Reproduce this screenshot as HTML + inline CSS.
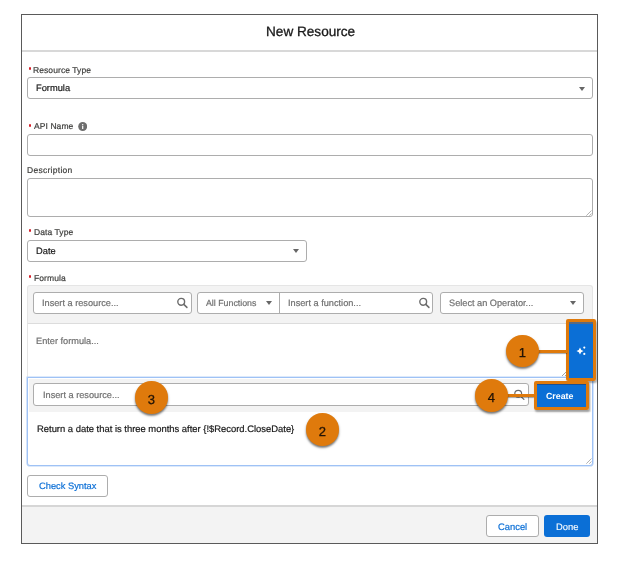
<!DOCTYPE html>
<html><head><meta charset="utf-8">
<style>
*{box-sizing:border-box;margin:0;padding:0}
html,body{width:621px;height:563px;background:#fff;overflow:hidden;position:relative;-webkit-font-smoothing:antialiased;text-rendering:geometricPrecision;font-family:"Liberation Sans",sans-serif;color:#181818}
.a{position:absolute}
.t{position:absolute;white-space:nowrap;line-height:1;will-change:transform;-webkit-text-stroke:0.2px currentColor}
.box{position:absolute;border:1px solid #adadad;border-radius:3px;background:#fff}
.lbl{font-size:8.5px;color:#3e3e3c;letter-spacing:0.08px}
.dot{position:absolute;left:28.6px;width:2.9px;height:2.9px;border-radius:50%;background:#d4202a}
.tri{position:absolute;width:0;height:0;border-left:3.9px solid transparent;border-right:3.9px solid transparent;border-top:4.4px solid #666}
.ph{color:#6f6f6f;font-size:9.2px}
.circ{position:absolute;width:32.5px;height:32.5px;border-radius:50%;background:#df7a0c;box-shadow:0 1.8px 2.2px rgba(0,0,0,.55)}
.circ span{position:absolute;left:0;right:0;top:11.5px;will-change:transform;-webkit-text-stroke:0.3px #231406;text-align:center;font-size:13px;line-height:1;color:#231406;font-family:"Liberation Sans",sans-serif}
.oline{position:absolute;height:3px;background:#df7a0c;box-shadow:0 1px 1px rgba(0,0,0,.35)}
</style></head><body>

<!-- dialog -->
<div class="a" style="left:21px;top:14px;width:577px;height:530px;border:1px solid #5a5a5a;background:#fff"></div>
<div class="a" style="left:22px;top:50px;width:575px;height:2px;background:#d8d8d8"></div>
<div class="t" style="left:266px;top:24.8px;font-size:13.6px;color:#181818;-webkit-text-stroke:0.3px #181818">New Resource</div>

<!-- Resource Type -->
<div class="dot" style="top:66.8px"></div><div class="t lbl" style="left:33.1px;top:65.6px">Resource Type</div>
<div class="box" style="left:27px;top:77px;width:566px;height:22px"></div>
<div class="t" style="left:36px;top:84px;font-size:9.3px">Formula</div>
<div class="tri" style="left:579px;top:86.6px"></div>

<!-- API Name -->
<div class="dot" style="top:123.7px"></div><div class="t lbl" style="left:33.7px;top:121.8px">API Name</div>
<svg class="a" style="left:78px;top:121.5px" width="9.4" height="9.4" viewBox="0 0 9.4 9.4"><circle cx="4.7" cy="4.5" r="4.5" fill="#6e6e6e"/><circle cx="4.7" cy="2.7" r="0.75" fill="#fff"/><path d="M4.1 4.0 H5.3 V6.9 H4.1Z" fill="#fff"/></svg>
<div class="box" style="left:27px;top:133.5px;width:566px;height:22px"></div>

<!-- Description -->
<div class="t lbl" style="left:27px;top:165.7px;letter-spacing:0.28px">Description</div>
<div class="box" style="left:27px;top:177.5px;width:566px;height:39.3px"></div>

<!-- Data Type -->
<div class="dot" style="top:229.2px"></div><div class="t lbl" style="left:33.7px;top:228px">Data Type</div>
<div class="box" style="left:27px;top:239.5px;width:280px;height:22px"></div>
<div class="t" style="left:35.5px;top:247px;font-size:9.3px">Date</div>
<div class="tri" style="left:293px;top:248.8px"></div>

<!-- Formula -->
<div class="dot" style="top:275.2px"></div><div class="t lbl" style="left:33.7px;top:274px">Formula</div>
<div class="a" style="left:27px;top:285px;width:566px;height:39px;background:#f3f3f3;border:1px solid #e5e5e5;border-bottom:1.5px solid #dcdcdc;border-radius:3px 3px 0 0"></div>
<div class="box" style="left:33px;top:291.5px;width:159px;height:22px"></div>
<div class="t ph" style="left:42px;top:299px">Insert a resource...</div>
<div class="box" style="left:197px;top:291.5px;width:236px;height:22px"></div>
<div class="a" style="left:279px;top:292px;width:1px;height:21px;background:#adadad"></div>
<div class="t ph" style="left:206px;top:299px;font-size:8.8px">All Functions</div>
<div class="tri" style="left:266px;top:300.8px"></div>
<div class="t ph" style="left:288px;top:299px">Insert a function...</div>
<div class="box" style="left:439.5px;top:291.5px;width:144px;height:22px"></div>
<div class="t ph" style="left:448.5px;top:299px">Select an Operator...</div>
<div class="tri" style="left:570px;top:301px"></div>

<!-- editor -->
<div class="a" style="left:27px;top:324px;width:566px;height:54px;border-left:1px solid #e5e5e5;border-right:1px solid #e5e5e5"></div>
<div class="t ph" style="left:36px;top:336.5px">Enter formula...</div>

<!-- focused textarea -->
<div class="a" style="left:27px;top:377px;width:566px;height:89px;border:1px solid #9fc2f5;border-radius:0 0 3px 3px;background:#fff;box-shadow:0 0 0 0.6px #b9d3f8"></div>
<div class="a" style="left:29px;top:379px;width:562px;height:32.5px;background:#f3f3f3"></div>
<div class="box" style="left:33.3px;top:383px;width:495.5px;height:22.5px"></div>
<div class="t ph" style="left:43px;top:390.5px">Insert a resource...</div>
<div class="t" style="left:36.5px;top:424px;font-size:9.42px;color:#181818">Return a date that is three months after {!$Record.CloseDate}</div>

<!-- check syntax -->
<div class="box" style="left:27px;top:475px;width:81px;height:22px"></div>
<div class="t" style="left:38.5px;top:482px;font-size:9.3px;color:#0b6fd6">Check Syntax</div>

<!-- footer -->
<div class="a" style="left:22px;top:505px;width:575px;height:38px;background:#f3f3f3;border-top:2px solid #d6d6d6"></div>
<div class="box" style="left:486px;top:515px;width:53px;height:22px"></div>
<div class="t" style="left:498px;top:521.8px;font-size:9.4px;color:#0b6fd6">Cancel</div>
<div class="a" style="left:544px;top:515px;width:46px;height:22px;background:#0b6fd6;border-radius:3px"></div>
<div class="t" style="left:556px;top:521.8px;font-size:9.4px;color:#fff;-webkit-text-stroke:0.1px #fff">Done</div>


<!-- search icons -->
<svg class="a" style="left:174px;top:294px" width="18" height="18" viewBox="0 0 18 18"><circle cx="7.2" cy="7.8" r="3.4" fill="none" stroke="#6b6b6b" stroke-width="1.4"/><line x1="9.8" y1="10.4" x2="12.9" y2="13.4" stroke="#6b6b6b" stroke-width="1.5" stroke-linecap="round"/></svg>
<svg class="a" style="left:416px;top:294px" width="18" height="18" viewBox="0 0 18 18"><circle cx="7.2" cy="7.8" r="3.4" fill="none" stroke="#6b6b6b" stroke-width="1.4"/><line x1="9.8" y1="10.4" x2="12.9" y2="13.4" stroke="#6b6b6b" stroke-width="1.5" stroke-linecap="round"/></svg>
<svg class="a" style="left:511px;top:386px" width="18" height="18" viewBox="0 0 18 18"><circle cx="7.2" cy="7.8" r="3.4" fill="none" stroke="#6b6b6b" stroke-width="1.2"/><line x1="9.8" y1="10.4" x2="12.9" y2="13.4" stroke="#6b6b6b" stroke-width="1.3" stroke-linecap="round"/></svg>
<!-- resize grips -->
<svg class="a" style="left:582px;top:206px" width="12" height="12" viewBox="0 0 12 12"><line x1="9.5" y1="4.5" x2="4.3" y2="9.7" stroke="#a0a0a0" stroke-width="0.8"/><line x1="9.5" y1="7.5" x2="7.3" y2="9.7" stroke="#a0a0a0" stroke-width="0.8"/></svg>
<svg class="a" style="left:582px;top:454px" width="12" height="12" viewBox="0 0 12 12"><line x1="9.5" y1="4.5" x2="4.3" y2="9.7" stroke="#a0a0a0" stroke-width="0.8"/><line x1="9.5" y1="7.5" x2="7.3" y2="9.7" stroke="#a0a0a0" stroke-width="0.8"/></svg>
<svg class="a" style="left:558px;top:367px" width="12" height="12" viewBox="0 0 12 12"><line x1="9" y1="4" x2="4" y2="9" stroke="#9a9a9a" stroke-width="0.9"/><line x1="9" y1="7" x2="7" y2="9" stroke="#9a9a9a" stroke-width="0.9"/></svg>

<!-- sparkle button + annotation -->
<div class="a" style="left:566px;top:319px;width:30px;height:61.5px;border:3px solid #df7a0c;border-radius:2px;box-shadow:1px 2px 2px rgba(0,0,0,.35)"></div>
<div class="a" style="left:569px;top:322px;width:24px;height:55.5px;background:#0b6fd6;border-top:2px solid #5a6a80"></div>


<svg class="a" style="left:570px;top:340px" width="22" height="22" viewBox="0 0 22 22"><path d="M10 7.4 Q10.6 10.3 13.5 10.9 Q10.6 11.5 10 14.4 Q9.4 11.5 6.5 10.9 Q9.4 10.3 10 7.4Z" fill="#fff"/><circle cx="14.3" cy="7.6" r="1.1" fill="#fff"/><circle cx="14.3" cy="13.9" r="1.1" fill="#fff"/></svg>

<!-- create button + annotation -->
<div class="a" style="left:533.5px;top:381px;width:55.5px;height:29px;border:3px solid #df7a0c;border-radius:2px;box-shadow:1px 2px 2px rgba(0,0,0,.35)"></div>
<div class="a" style="left:536.5px;top:384px;width:49.5px;height:23px;background:#0b6fd6;box-shadow:inset 0 1px 0 #1d4f8f"></div>
<div class="t" style="left:546.2px;top:391.8px;font-size:8.8px;font-weight:bold;color:#fff;-webkit-text-stroke:0">Create</div>

<!-- lines -->
<div class="oline" style="left:530px;top:349.5px;width:37px"></div>
<div class="oline" style="left:500px;top:393.5px;width:34px"></div>

<!-- circles -->
<div class="circ" style="left:506.3px;top:334.5px"><span>1</span></div>
<div class="circ" style="left:306.3px;top:413.3px"><span>2</span></div>
<div class="circ" style="left:135px;top:381px"><span>3</span></div>
<div class="circ" style="left:475px;top:379px"><span>4</span></div>

</body></html>
